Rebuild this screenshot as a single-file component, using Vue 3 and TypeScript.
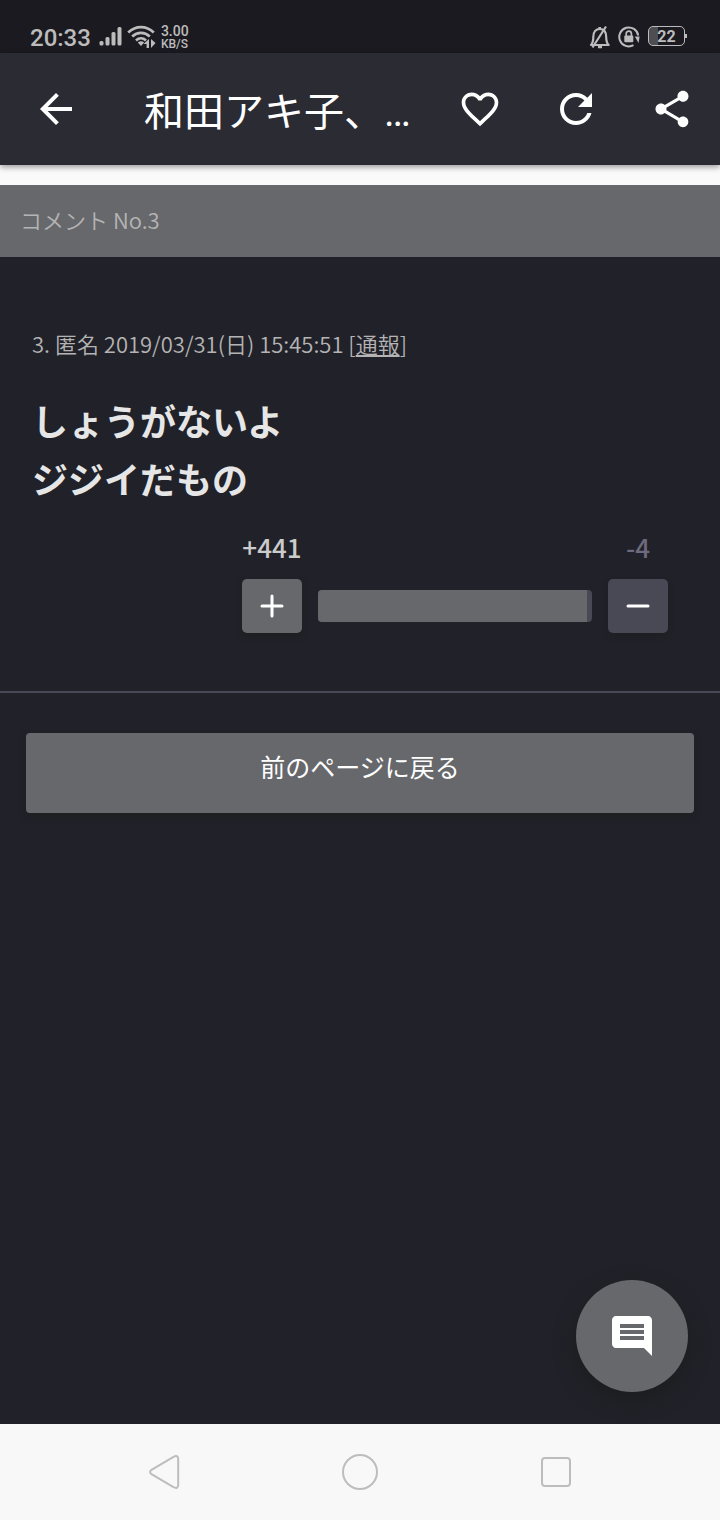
<script setup lang="ts">
import { computed, ref } from 'vue'

const title = '和田アキ子、…'
const lines = ['しょうがないよ', 'ジジイだもの']
const plus = ref(441)
const minus = ref(4)
const plusShare = computed(() => Math.min(98, (plus.value / (plus.value + minus.value)) * 100) + '%')
</script>

<template>
  <div class="screen">
    <div class="status">
      <div class="status-group">
        <span class="clock">20:33</span>
        <svg class="signal" width="24" height="20" viewBox="0 0 24 20" aria-hidden="true">
          <rect x="0.5" y="14" width="4" height="4.5" rx="1.5" />
          <rect x="6.5" y="10" width="4" height="8.5" rx="1.5" />
          <rect x="12.5" y="5" width="4" height="13.5" rx="1.5" />
          <rect x="18.5" y="0" width="4" height="18.5" rx="1.5" />
        </svg>
        <svg class="wifi" width="30" height="24" viewBox="0 0 30 24" aria-hidden="true">
          <g fill="none" stroke="currentColor" stroke-width="2.7">
            <path d="M1.2 7.6C9 0.4 19 0.4 26.8 7.6" />
            <path d="M5.2 11.6C10.5 6.6 17.5 6.6 22.8 11.6" />
            <path d="M9 15.4C12 12.6 16 12.6 19 15.4" />
          </g>
          <path d="M10.8 17.6Q14 15 17.2 17.6L14 21Z" />
          <path d="M16.5 19L22 14V23H19.6V19ZM24 14V23L28.5 18Z" />
        </svg>
        <span class="speed"><span>3.00</span><span>KB/S</span></span>
      </div>
      <div class="status-group right">
        <svg width="22" height="24" viewBox="0 0 22 24" fill="none" stroke="currentColor" stroke-width="2.2" aria-hidden="true">
          <path d="M3 20C5 18 5.3 16 5.3 12C5.3 6.5 8 4 11.8 4S18.2 6.5 18.2 12C18.2 16 18.7 18 20.6 20Z" stroke-linejoin="round" />
          <path d="M4.5 22.5L18 1.5M10 22.2H14M10.4 3.2H13" />
        </svg>
        <svg class="lock" width="22" height="22" viewBox="0 0 22 22" aria-hidden="true">
          <path d="M15.5 19.2A9.5 9.5 0 1 1 20.2 9.5" fill="none" stroke="currentColor" stroke-width="2" />
          <path d="M16.8 10.4L21.6 10.6L20.6 17Z" />
          <rect x="6.3" y="9.5" width="9" height="6.8" rx="1" />
          <path d="M8.2 10V7.8A2.6 2.6 0 0 1 13.4 7.8V10" fill="none" stroke="currentColor" stroke-width="1.7" />
        </svg>
        <span class="battery">22</span>
      </div>
    </div>

    <header class="bar">
      <button class="icon" type="button" aria-label="戻る">
        <svg width="48" height="48" viewBox="0 0 24 24"><path d="M20 11H7.83l5.59-5.59L12 4l-8 8 8 8 1.41-1.41L7.83 13H20v-2z" /></svg>
      </button>
      <h1>{{ title }}</h1>
      <button class="icon" type="button" aria-label="お気に入り">
        <svg width="44" height="44" viewBox="0 0 24 24"><path d="M16.5 3c-1.74 0-3.41.81-4.5 2.09C10.91 3.81 9.24 3 7.5 3 4.42 3 2 5.42 2 8.5c0 3.78 3.4 6.86 8.55 11.54L12 21.35l1.45-1.32C18.6 15.36 22 12.28 22 8.5 22 5.42 19.58 3 16.5 3zm-4.4 15.55l-.1.1-.1-.1C7.14 14.24 4 11.39 4 8.5 4 6.5 5.5 5 7.5 5c1.54 0 3.04.99 3.57 2.36h1.87C13.46 5.99 14.96 5 16.5 5c2 0 3.5 1.5 3.5 3.5 0 2.89-3.14 5.74-7.9 10.05z" /></svg>
      </button>
      <button class="icon" type="button" aria-label="更新">
        <svg width="48" height="48" viewBox="0 0 24 24"><path d="M17.65 6.35C16.2 4.9 14.21 4 12 4c-4.42 0-7.99 3.58-7.99 8s3.57 8 7.99 8c3.73 0 6.84-2.55 7.73-6h-2.08c-.82 2.33-3.04 4-5.65 4-3.31 0-6-2.69-6-6s2.69-6 6-6c1.66 0 3.14.69 4.22 1.78L13 11h7V4l-2.35 2.35z" /></svg>
      </button>
      <button class="icon" type="button" aria-label="共有">
        <svg width="44" height="44" viewBox="0 0 24 24"><path d="M18 16.08c-.76 0-1.44.3-1.96.77L8.91 12.7c.05-.23.09-.46.09-.7s-.04-.47-.09-.7l7.05-4.11c.54.5 1.25.81 2.04.81 1.66 0 3-1.34 3-3s-1.34-3-3-3-3 1.34-3 3c0 .24.04.47.09.7L8.04 9.81C7.5 9.31 6.79 9 6 9c-1.66 0-3 1.34-3 3s1.34 3 3 3c.79 0 1.5-.31 2.04-.81l7.12 4.16c-.05.21-.08.43-.08.65 0 1.61 1.31 2.92 2.92 2.92 1.61 0 2.92-1.31 2.92-2.92s-1.31-2.92-2.92-2.92z" /></svg>
      </button>
    </header>

    <main>
      <h2>コメント No.3</h2>
      <article>
        <p class="meta">3. 匿名 2019/03/31(日) 15:45:51 [<a href="#report">通報</a>]</p>
        <p class="comment"><span v-for="line in lines" :key="line">{{ line }}</span></p>
        <div class="votes">
          <span class="count">+{{ plus }}</span>
          <span class="count down">-{{ minus }}</span>
          <button class="vote" type="button" aria-label="プラス" @click="plus++">
            <svg width="24" height="24" viewBox="0 0 24 24"><path d="M2 12H22M12 2V22" /></svg>
          </button>
          <div class="ratio"><span :style="{ width: plusShare }"></span></div>
          <button class="vote down" type="button" aria-label="マイナス" @click="minus++">
            <svg width="24" height="24" viewBox="0 0 24 24"><path d="M2 12H22" /></svg>
          </button>
        </div>
      </article>
      <button class="back" type="button">前のページに戻る</button>
      <button class="fab" type="button" aria-label="コメントする">
        <svg width="48" height="48" viewBox="0 0 24 24"><path d="M21.99 4c0-1.1-.89-2-1.99-2H4c-1.1 0-2 .9-2 2v12c0 1.1.9 2 2 2h14l4 4-.01-18zM18 14H6v-2h12v2zm0-3H6V9h12v2zm0-3H6V6h12v2z" /></svg>
      </button>
    </main>

    <nav>
      <button type="button" aria-label="戻る">
        <svg width="40" height="40" viewBox="0 0 40 40"><path d="M7.5 17.9L29.5 4.8Q34 2.6 34.2 7V33Q34 37.4 29.5 35.2L7.5 22.1Q4.5 20 7.5 17.9Z" /></svg>
      </button>
      <button type="button" aria-label="ホーム">
        <svg width="40" height="40" viewBox="0 0 40 40"><circle cx="20" cy="20" r="17" /></svg>
      </button>
      <button type="button" aria-label="最近のアプリ">
        <svg width="40" height="40" viewBox="0 0 40 40"><rect x="6" y="6" width="28" height="28" rx="3" /></svg>
      </button>
    </nav>
  </div>
</template>

<style>
body {
  margin: 0;
  background: #212129;
}
</style>

<style scoped>
.screen {
  min-height: 100vh;
  display: flex;
  flex-direction: column;
  background: #212129;
  color: #b4b4b4;
  font-family: "Noto Sans CJK JP", sans-serif;
}
button {
  display: flex;
  align-items: center;
  justify-content: center;
  padding: 0;
  border: 0;
  background: none;
  color: #fff;
  font: inherit;
  cursor: pointer;
}
svg {
  display: block;
  flex: none;
  fill: currentColor;
}
h1, h2, p {
  margin: 0;
  font-weight: 400;
}

.status {
  display: flex;
  align-items: center;
  justify-content: space-between;
  height: 53px;
  box-sizing: border-box;
  padding: 20px 32px 0 30px;
  background: #1b1a20;
  color: #bcbcbc;
  font-family: Roboto, sans-serif;
  font-weight: 500;
}
.status-group {
  display: flex;
  align-items: center;
  gap: 4px;
}
.status-group.right {
  gap: 8px;
}
.status-group.right svg[stroke] {
  fill: none;
}
.clock {
  padding-top: 2px;
  margin-right: 4px;
  font-size: 24px;
  line-height: 28px;
}
.speed {
  display: flex;
  flex-direction: column;
  padding-top: 2px;
  font-size: 12px;
  line-height: 13px;
}
.speed span:first-child {
  font-size: 14px;
}
.battery {
  position: relative;
  width: 37px;
  height: 20px;
  margin: 0 3px 2px 0;
  box-sizing: border-box;
  border: 1px solid currentColor;
  border-radius: 5px;
  background: linear-gradient(to right, #4d4d52 9px, transparent 9px);
  font-size: 16px;
  font-weight: 700;
  line-height: 19px;
  text-align: center;
}
.battery::after {
  content: "";
  position: absolute;
  top: 7px;
  right: -3px;
  width: 2px;
  height: 4px;
  background: currentColor;
}

.bar {
  position: relative;
  z-index: 1;
  display: flex;
  align-items: center;
  height: 112px;
  box-sizing: border-box;
  background: #2b2b34;
  color: #fff;
  box-shadow: 0 2px 6px rgba(0, 0, 0, 0.4);
}
.icon {
  flex: none;
  width: 96px;
  height: 96px;
}
.icon:first-child {
  width: 112px;
}
h1 {
  flex: 1;
  min-width: 0;
  padding: 8px 0 0 32px;
  overflow: hidden;
  white-space: nowrap;
  font-family: Roboto, "Noto Sans CJK JP", sans-serif;
  font-size: 40px;
  line-height: 60px;
}

main {
  position: relative;
  flex: 1;
  border-top: 20px solid #fafafa;
}
h2 {
  padding: 0 20px 4px;
  background: #67686c;
  font-size: 22px;
  font-weight: 350;
  line-height: 68px;
}
article {
  padding: 70px 52px 58px 32px;
  border-bottom: 2px solid #494855;
}
.meta {
  font-size: 22px;
  font-weight: 350;
  line-height: 32px;
}
.meta a {
  color: inherit;
}
.comment {
  margin: 32px 0 20px;
  color: #e6e6e6;
  font-size: 36px;
  font-weight: 700;
  line-height: 58px;
}
.comment span {
  display: block;
}
.votes {
  display: grid;
  grid-template-columns: 60px 1fr 60px;
  align-items: center;
  gap: 12px 16px;
  max-width: 426px;
  margin-left: auto;
}
.count {
  display: flex;
  justify-content: center;
  color: #ccc;
  font-size: 26px;
  font-weight: 500;
  line-height: 40px;
}
.count.down {
  grid-column: 3;
  color: #6c6a7c;
}
.vote {
  height: 54px;
  border-radius: 5px;
  background: #67686c;
  box-shadow: 0 3px 5px rgba(27, 31, 27, 0.6);
}
.vote.down {
  background: #494855;
}
.vote path {
  fill: none;
  stroke: currentColor;
  stroke-width: 3;
  stroke-linecap: round;
}
.ratio {
  height: 32px;
  border-radius: 4px;
  overflow: hidden;
  background: #494855;
}
.ratio span {
  display: block;
  height: 100%;
  background: #67686c;
}
.back {
  width: calc(100% - 52px);
  height: 80px;
  margin: 40px 26px;
  padding-bottom: 14px;
  border-radius: 4px;
  background: #67686c;
  box-shadow: 0 4px 6px rgba(27, 31, 27, 0.7);
  font-size: 25px;
}
.fab {
  position: absolute;
  right: 32px;
  bottom: 32px;
  width: 112px;
  height: 112px;
  border-radius: 50%;
  background: #67686c;
  box-shadow: 0 8px 20px rgba(27, 29, 27, 0.8);
}

nav {
  display: flex;
  align-items: center;
  justify-content: center;
  gap: 100px;
  height: 96px;
  background: #f8f8f8;
}
nav button {
  width: 96px;
  height: 96px;
}
nav svg {
  fill: none;
  stroke: #bdbdbd;
  stroke-width: 2;
}
</style>
